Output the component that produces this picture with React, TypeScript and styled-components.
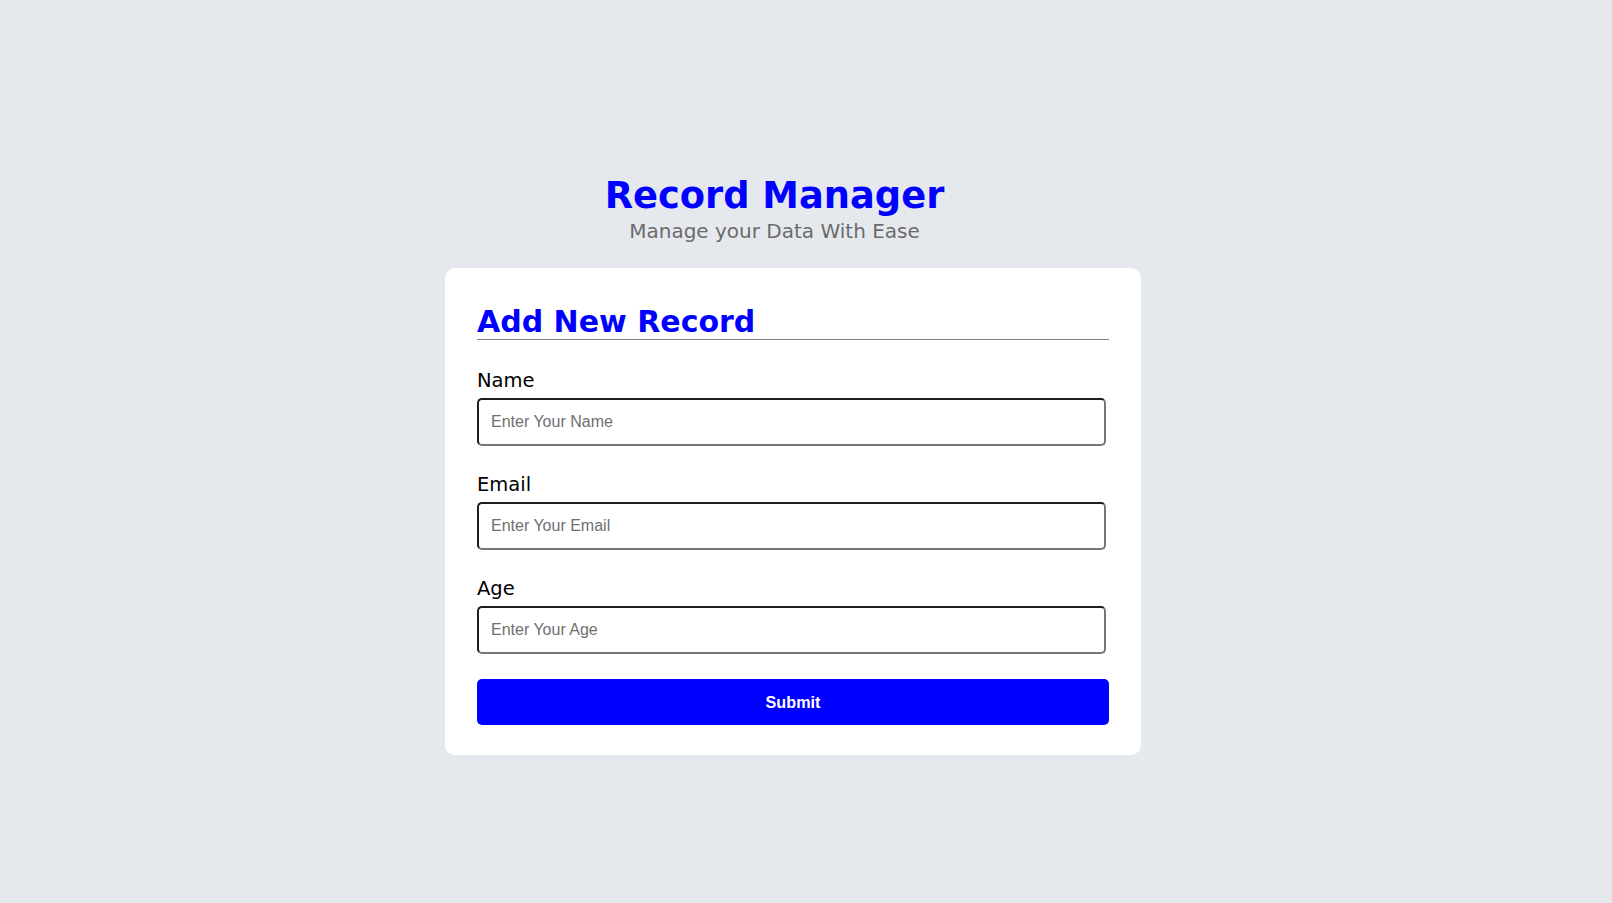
import React from 'react';
import styled, { createGlobalStyle } from 'styled-components';

const GlobalStyle = createGlobalStyle`
  * {
    box-sizing: border-box;
  }
  body {
    margin: 0;
    background: #e5e9ee;
    font-family: 'DejaVu Sans', Verdana, sans-serif;
  }
`;

const Page = styled.div`
  display: flex;
  flex-direction: column;
  align-items: center;
  padding: 171px 26px 0 0;
`;

const Header = styled.header`
  width: 696px;
  padding-right: 37px;
  text-align: center;
  margin-bottom: 25px;
`;

const Title = styled.h1`
  margin: 0;
  font-size: 36.8px;
  line-height: 49px;
  font-weight: 700;
  color: #0000ff;
`;

const Subtitle = styled.p`
  margin: 0;
  font-size: 20px;
  line-height: 23px;
  color: #6b6b6b;
`;

const Card = styled.form`
  width: 696px;
  background: #ffffff;
  border-radius: 10px;
  padding: 37px 32px 30px;
  display: flex;
  flex-direction: column;
`;

const CardTitle = styled.h2`
  margin: 0 0 29px;
  font-size: 30px;
  line-height: 34px;
  font-weight: 700;
  color: #0000ff;
  border-bottom: 1px solid #808080;
`;

const Field = styled.div`
  display: flex;
  flex-direction: column;
  gap: 6px;
  margin-bottom: 27px;
  &:last-of-type {
    margin-bottom: 25px;
  }
`;

const Label = styled.label`
  font-size: 19.5px;
  line-height: 23px;
  color: #000000;
`;

const Input = styled.input`
  width: 629px;
  height: 48px;
  padding: 0 12px;
  border-width: 2px;
  border-style: solid;
  border-color: #1e1e1e #767676 #767676 #1e1e1e;
  border-radius: 5px;
  font-family: 'Liberation Sans', Arial, sans-serif;
  font-size: 16px;
  color: #000;
  background: #fff;
  outline: none;
  &::placeholder {
    color: #6f6f6f;
  }
`;

const SubmitButton = styled.button`
  width: 100%;
  height: 46px;
  border: none;
  border-radius: 5px;
  background: #0000ff;
  color: #ffffff;
  font-family: 'Liberation Sans', Arial, sans-serif;
  font-size: 16.2px;
  font-weight: 700;
  cursor: pointer;
`;

const fields = [
  { id: 'name', label: 'Name', placeholder: 'Enter Your Name', type: 'text' },
  { id: 'email', label: 'Email', placeholder: 'Enter Your Email', type: 'email' },
  { id: 'age', label: 'Age', placeholder: 'Enter Your Age', type: 'number' },
];

const App: React.FC = () => {
  return (
    <>
      <GlobalStyle />
      <Page>
        <Header>
          <Title>Record Manager</Title>
          <Subtitle>Manage your Data With Ease</Subtitle>
        </Header>
        <Card onSubmit={(e) => e.preventDefault()}>
          <CardTitle>Add New Record</CardTitle>
          {fields.map((field) => (
            <Field key={field.id}>
              <Label htmlFor={field.id}>{field.label}</Label>
              <Input id={field.id} type={field.type} placeholder={field.placeholder} />
            </Field>
          ))}
          <SubmitButton type="submit">Submit</SubmitButton>
        </Card>
      </Page>
    </>
  );
};

export default App;
